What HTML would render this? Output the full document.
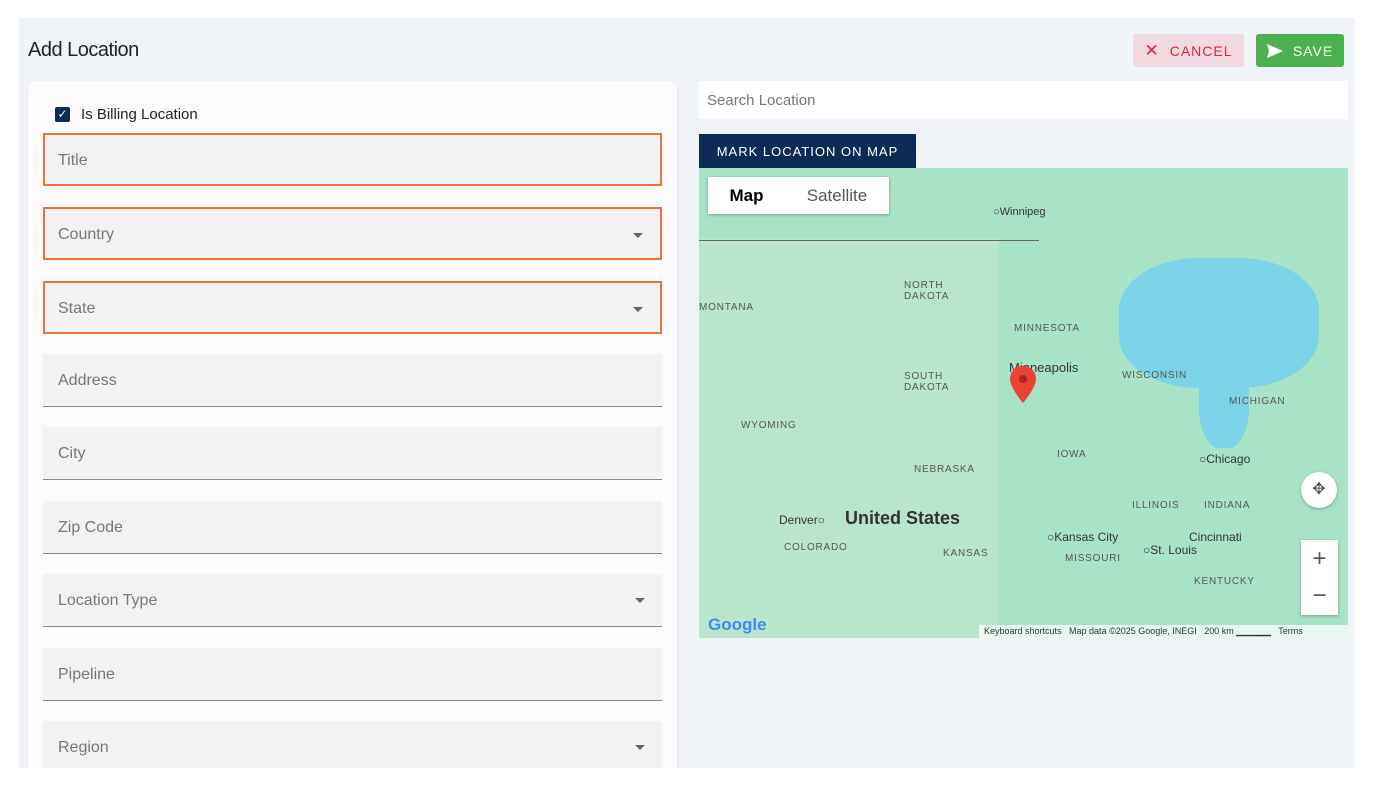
<!DOCTYPE html>
<html><head><style>
*{box-sizing:border-box;margin:0;padding:0}
body{width:1375px;height:788px;background:#fff;font-family:"Liberation Sans",sans-serif;position:relative;overflow:hidden}
.bg{position:absolute;left:19px;top:18px;width:1336px;height:750px;background:#f0f3f8}
h1{position:absolute;left:28px;top:39px;font-size:20px;font-weight:normal;color:#222;letter-spacing:-0.5px}
.btn{position:absolute;top:34px;height:33px;border-radius:3px;font-size:14px;letter-spacing:1px;display:flex;align-items:center;justify-content:center;gap:10px}
.card{position:absolute;left:28px;top:81px;width:649px;height:700px;background:#fdfafd;border-radius:8px;box-shadow:0 1px 2px rgba(0,0,0,.08)}
.f{position:absolute;left:43px;width:619px;height:53px;background:#f4f1f4;border-bottom:1px solid #888;font-size:16px;color:#777;padding:2px 15px 0;display:flex;align-items:center}
.f.o{border:2px solid #e8743b;padding:2px 13px 0}
.ar{position:absolute;right:17px;top:24px;border-left:5px solid transparent;border-right:5px solid transparent;border-top:5px solid #666}
.map{position:absolute;left:699px;top:168px;width:649px;height:470px;background:#a9e3c7;overflow:hidden}
.lbl{position:absolute;font-size:10px;color:#555;letter-spacing:.8px}
.cut{position:absolute;left:0;top:768px;width:1375px;height:20px;background:#fff}
</style></head><body>
<div class="bg"></div>
<h1>Add Location</h1>
<div class="btn" style="left:1133px;width:111px;background:#f0d9df;color:#d7263d"><span style="font-size:17px">✕</span>CANCEL</div>
<div class="btn" style="left:1256px;width:88px;background:#4caf50;color:#fff"><svg width="16" height="14" viewBox="0 0 16 14"><path d="M0 0L16 7L0 14L2 7Z" fill="#fff"/></svg>SAVE</div>
<div class="card"></div>
<div style="position:absolute;left:55px;top:107px;width:15px;height:15px;background:#0e2a57;border-radius:2px;color:#fff;font-size:12px;text-align:center;line-height:15px">✓</div>
<div style="position:absolute;left:81px;top:106px;font-size:15px;color:#222">Is Billing Location</div>
<div class="f o" style="top:133px">Title</div>
<div class="f o" style="top:207px">Country<span class="ar"></span></div>
<div class="f o" style="top:281px">State<span class="ar"></span></div>
<div class="f" style="top:354px">Address</div>
<div class="f" style="top:427px">City</div>
<div class="f" style="top:501px">Zip Code</div>
<div class="f" style="top:574px">Location Type<span class="ar"></span></div>
<div class="f" style="top:648px">Pipeline</div>
<div class="f" style="top:721px">Region<span class="ar"></span></div>
<div class="cut"></div>
<div style="position:absolute;left:699px;top:81px;width:649px;height:38px;background:#fff;font-size:15px;color:#777;padding:11px 8px">Search Location</div>
<div style="position:absolute;left:699px;top:134px;width:217px;height:34px;background:#0e2a57;color:#fff;font-size:13px;letter-spacing:1px;text-align:center;line-height:35px">MARK LOCATION ON MAP</div>
<div class="map">
<div style="position:absolute;left:0;top:70px;width:300px;height:400px;background:#c4e6cf;opacity:.6"></div>
<div style="position:absolute;left:420px;top:90px;width:200px;height:130px;background:#7cd3e8;border-radius:40%"></div>
<div style="position:absolute;left:500px;top:180px;width:50px;height:100px;background:#7cd3e8;border-radius:40%"></div>
<div style="position:absolute;left:0;top:72px;width:340px;height:1px;background:#666"></div>
<div style="position:absolute;left:9px;top:9px;width:181px;height:37px;background:#fff;box-shadow:0 1px 3px rgba(0,0,0,.3);font-size:17px;display:flex"><div style="width:77px;text-align:center;line-height:37px;font-weight:bold;color:#000">Map</div><div style="flex:1;text-align:center;line-height:37px;color:#555">Satellite</div></div>
<div class="lbl" style="left:294px;top:38px;letter-spacing:0;font-size:11px;color:#333">○Winnipeg</div>
<div class="lbl" style="left:205px;top:112px">NORTH<br>DAKOTA</div>
<div class="lbl" style="left:0;top:134px">MONTANA</div>
<div class="lbl" style="left:315px;top:155px">MINNESOTA</div>
<div class="lbl" style="left:205px;top:203px">SOUTH<br>DAKOTA</div>
<div class="lbl" style="left:310px;top:192px;font-size:13px;color:#333;letter-spacing:0">Minneapolis</div>
<div class="lbl" style="left:423px;top:202px">WISCONSIN</div>
<div class="lbl" style="left:530px;top:228px">MICHIGAN</div>
<div class="lbl" style="left:42px;top:252px">WYOMING</div>
<div class="lbl" style="left:358px;top:281px">IOWA</div>
<div class="lbl" style="left:215px;top:296px">NEBRASKA</div>
<div class="lbl" style="left:500px;top:284px;font-size:12px;color:#333;letter-spacing:0">○Chicago</div>
<div class="lbl" style="left:146px;top:340px;font-size:18px;font-weight:bold;color:#333;letter-spacing:0">United States</div>
<div class="lbl" style="left:80px;top:345px;font-size:12px;color:#333;letter-spacing:0">Denver○</div>
<div class="lbl" style="left:348px;top:362px;font-size:12px;color:#333;letter-spacing:0">○Kansas City</div>
<div class="lbl" style="left:444px;top:375px;font-size:12px;color:#333;letter-spacing:0">○St. Louis</div>
<div class="lbl" style="left:490px;top:362px;font-size:12px;color:#333;letter-spacing:0">Cincinnati</div>
<div class="lbl" style="left:85px;top:374px">COLORADO</div>
<div class="lbl" style="left:244px;top:380px">KANSAS</div>
<div class="lbl" style="left:366px;top:385px">MISSOURI</div>
<div class="lbl" style="left:433px;top:332px">ILLINOIS</div>
<div class="lbl" style="left:505px;top:332px">INDIANA</div>
<div class="lbl" style="left:495px;top:408px">KENTUCKY</div>
<svg style="position:absolute;left:311px;top:198px" width="26" height="37" viewBox="0 0 26 37"><path d="M13 0C5 0 0 6 0 13c0 9 13 24 13 24s13-15 13-24C26 6 21 0 13 0z" fill="#ea4335"/><circle cx="13" cy="13" r="4" fill="#a52714"/></svg>
<div style="position:absolute;left:602px;top:304px;width:36px;height:36px;border-radius:50%;background:#fff;box-shadow:0 1px 3px rgba(0,0,0,.3);text-align:center;line-height:36px;color:#555">✥</div>
<div style="position:absolute;left:602px;top:372px;width:37px;height:75px;background:#fff;box-shadow:0 1px 3px rgba(0,0,0,.3);font-size:24px;color:#555;text-align:center;line-height:37px">+<br>−</div>
<div style="position:absolute;left:9px;top:447px;font-size:17px;font-weight:bold;color:#4285f4">Google</div>
<div style="position:absolute;left:280px;top:457px;width:369px;height:13px;background:rgba(255,255,255,.7);font-size:9px;color:#333;padding:1px 5px;white-space:nowrap">Keyboard shortcuts &nbsp; Map data ©2025 Google, INEGI &nbsp; 200 km ▁▁▁▁▁ &nbsp; Terms</div>
</div>
</body></html>
